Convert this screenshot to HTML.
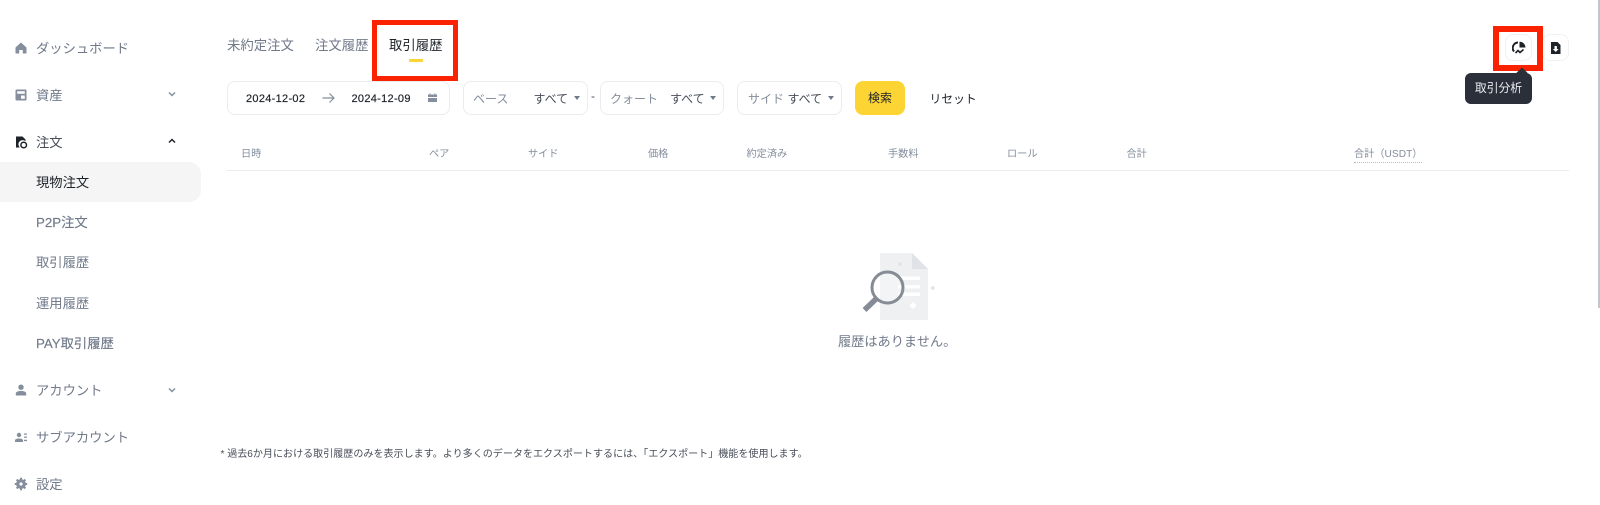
<!DOCTYPE html>
<html lang="ja"><head><meta charset="utf-8">
<style>
html,body{margin:0;padding:0;background:#fff;}
body{width:1600px;height:505px;position:relative;overflow:hidden;font-family:"Liberation Sans","Noto Sans CJK JP",sans-serif;color:#1e2329;}
.t{position:absolute;white-space:nowrap;line-height:20px;}
.side{font-size:13.3px;color:#707a8a;}
.th{font-size:10.2px;color:#848e9c;}
.f{font-size:12px;}
.d{font-size:11px;letter-spacing:.3px;color:#1e2329;-webkit-text-stroke:.2px #1e2329;}
.box{position:absolute;box-sizing:border-box;border:1px solid #eaecef;border-radius:8px;background:#fff;}
svg{position:absolute;}
.red{position:absolute;box-sizing:border-box;border:5px solid #fa2200;}
.car{position:absolute;width:0;height:0;border-left:3px solid transparent;border-right:3px solid transparent;border-top:4px solid #707a8a;}
</style></head><body>
<div style="position:absolute;left:0;top:162px;width:201px;height:40px;background:#f5f5f5;border-radius:0 12px 12px 0"></div>

<svg style="left:14px;top:41px" width="14" height="14" viewBox="0 0 14 14"><path d="M7 1.5L1.5 6.5V12.5H5.2V9H8.8V12.5H12.5V6.5Z" fill="#848e9c"/></svg>
<div class="t side" style="left:36px;top:39px">ダッシュボード</div>
<svg style="left:14px;top:88px" width="14" height="14" viewBox="0 0 14 14"><path fill-rule="evenodd" d="M2.5 1.5H11.5A1 1 0 0 1 12.5 2.5V11.5A1 1 0 0 1 11.5 12.5H2.5A1 1 0 0 1 1.5 11.5V2.5A1 1 0 0 1 2.5 1.5ZM3.2 3.2V5.8H10.8V3.2ZM7 7.5V10.8H10.8V7.5Z" fill="#848e9c"/></svg>
<div class="t side" style="left:36px;top:86px">資産</div>
<svg style="left:166px;top:88px" width="12" height="12" viewBox="0 0 12 12"><path d="M3 4.5L6 7.5L9 4.5" fill="none" stroke="#848e9c" stroke-width="1.5"/></svg>
<svg style="left:14px;top:135px" width="14" height="14" viewBox="0 0 14 14"><path d="M2 1.5H8.5L11.5 4.5V6.2A4.2 4.2 0 0 0 5.8 12.5H2Z" fill="#1e2329"/><circle cx="9.7" cy="10" r="2.8" fill="none" stroke="#1e2329" stroke-width="1.5"/></svg>
<div class="t side" style="left:36px;top:133px;color:#474d57">注文</div>
<svg style="left:166px;top:135px" width="12" height="12" viewBox="0 0 12 12"><path d="M3 7.5L6 4.5L9 7.5" fill="none" stroke="#1e2329" stroke-width="1.5"/></svg>

<div class="t side" style="left:36px;top:173px;color:#1e2329">現物注文</div>
<div class="t side" style="left:36px;top:213px;-webkit-text-stroke:.15px #707a8a">P2P注文</div>
<div class="t side" style="left:36px;top:253px">取引履歴</div>
<div class="t side" style="left:36px;top:294px">運用履歴</div>
<div class="t side" style="left:36px;top:334px;-webkit-text-stroke:.15px #707a8a">PAY取引履歴</div>

<svg style="left:14px;top:383px" width="14" height="14" viewBox="0 0 14 14"><circle cx="7" cy="4.2" r="2.7" fill="#848e9c"/><path d="M1.8 12.5V10.5C1.8 8.8 4 8 7 8S12.2 8.8 12.2 10.5V12.5Z" fill="#848e9c"/></svg>
<div class="t side" style="left:36px;top:381px">アカウント</div>
<svg style="left:166px;top:384px" width="12" height="12" viewBox="0 0 12 12"><path d="M3 4.5L6 7.5L9 4.5" fill="none" stroke="#848e9c" stroke-width="1.5"/></svg>
<svg style="left:14px;top:430px" width="14" height="14" viewBox="0 0 14 14"><circle cx="5" cy="5" r="2.2" fill="#848e9c"/><path d="M1 12V10.5C1 9 3 8.5 5 8.5S9 9 9 10.5V12Z" fill="#848e9c"/><path d="M10 3.5H13V4.8H10ZM10 6.5H13V7.8H10ZM10 9.8H13V11.1H10Z" fill="#848e9c"/></svg>
<div class="t side" style="left:36px;top:428px">サブアカウント</div>
<svg style="left:14px;top:477px" width="14" height="14" viewBox="0 0 14 14"><circle cx="7" cy="7" r="3.4" fill="none" stroke="#848e9c" stroke-width="3"/><path d="M7 .8V13.2M.8 7H13.2M2.6 2.6L11.4 11.4M11.4 2.6L2.6 11.4" stroke="#848e9c" stroke-width="2"/><circle cx="7" cy="7" r="1.6" fill="#fff"/></svg>
<div class="t side" style="left:36px;top:475px">設定</div>

<div class="t" style="left:227px;top:36px;font-size:13.4px;color:#707a8a">未約定注文</div>
<div class="t" style="left:315px;top:36px;font-size:13.4px;color:#707a8a">注文履歴</div>
<div class="t" style="left:389px;top:36px;font-size:13.4px;color:#1e2329">取引履歴</div>
<div style="position:absolute;left:408.500px;top:59px;width:14px;height:2.5px;background:#fcd535;border-radius:1px"></div>
<div class="red" style="left:372px;top:20px;width:86px;height:61px"></div>

<div class="box" style="left:227px;top:81px;width:223px;height:34px"></div>
<div class="t d" style="left:246px;top:89px">2024-12-02</div>
<svg style="left:322px;top:92px" width="13" height="12" viewBox="0 0 13 12"><path d="M0.5 6H12M7.5 1.5L12 6L7.5 10.5" fill="none" stroke="#848e9c" stroke-width="1.2"/></svg>
<div class="t d" style="left:351.5px;top:89px">2024-12-09</div>
<svg style="left:427px;top:93px" width="11" height="10" viewBox="0 0 11 10"><path d="M2.5 0.5H3.5V1.5H7.5V0.5H8.5V1.5H10V4H1V1.5H2.5ZM1 5H10V9H1Z" fill="#848e9c"/></svg>

<div class="box" style="left:463px;top:81px;width:125px;height:34px"></div>
<div class="t f" style="left:473px;top:89px;color:#848e9c">ベース</div>
<div class="t f" style="left:533.5px;top:89px;color:#474d57">すべて</div>
<div class="car" style="left:574px;top:96px"></div>
<div class="t f" style="left:591px;top:86px;color:#474d57">-</div>
<div class="box" style="left:600px;top:81px;width:124px;height:34px"></div>
<div class="t f" style="left:610px;top:89px;color:#848e9c">クォート</div>
<div class="t f" style="left:670px;top:89px;color:#474d57">すべて</div>
<div class="car" style="left:710px;top:96px"></div>
<div class="box" style="left:737px;top:81px;width:105px;height:34px"></div>
<div class="t f" style="left:748px;top:89px;color:#848e9c">サイド</div>
<div class="t f" style="left:787.5px;top:89px;color:#474d57">すべて</div>
<div class="car" style="left:828px;top:96px"></div>
<div style="position:absolute;left:855px;top:81px;width:50px;height:34px;background:#fcd535;border-radius:8px;font-size:12px;line-height:35px;text-align:center;color:#1e2329">検索</div>
<div class="t" style="left:929.5px;top:89px;font-size:11.8px;color:#1e2329">リセット</div>

<div class="t th" style="left:241px;top:145px">日時</div>
<div class="t th" style="left:429px;top:145px">ペア</div>
<div class="t th" style="left:528px;top:145px">サイド</div>
<div class="t th" style="left:648px;top:145px">価格</div>
<div class="t th" style="left:746.5px;top:145px">約定済み</div>
<div class="t th" style="left:888px;top:145px">手数料</div>
<div class="t th" style="left:1007px;top:145px">ロール</div>
<div class="t th" style="left:1126.5px;top:145px">合計</div>
<div class="t th" style="left:1354px;top:147px;line-height:15px;border-bottom:1px dotted #b7bdc6">合計（USDT）</div>
<div style="position:absolute;left:227px;top:170px;width:1342px;height:1px;background:#eaecef"></div>

<svg style="left:860px;top:250px" width="80" height="72" viewBox="0 0 80 72">
<path d="M20 3H52L68 19V70H20Z" fill="#eef0f2"/>
<path d="M52 3L68 19H52Z" fill="#dfe2e6"/>
<path d="M38 26.500H60V30H38ZM38 35H60V38.500H38ZM38 42.500H60V46H38Z" fill="#fff"/>
<path d="M49.500 55.500L53 52L56.500 55.500L53 59Z" fill="#fff"/>
<circle cx="40" cy="14" r="1.8" fill="#dfe2e6"/><path d="M70.500 38L72.700 35.800L75 38L72.700 40.200Z" fill="#dfe2e6"/>
<circle cx="27.500" cy="37.500" r="15.500" fill="#fff" fill-opacity=".25" stroke="#858c96" stroke-width="3"/>
<path d="M16.500 48.500L4.500 60" stroke="#858c96" stroke-width="5.500"/>
</svg>
<div class="t" style="left:838px;top:332px;font-size:13.2px;color:#707a8a">履歴はありません。</div>

<div class="t" style="left:220.500px;top:444.500px;font-size:10.05px;color:#474d57">* 過去6か月における取引履歴のみを表示します。より多くのデータをエクスポートするには、「エクスポート」機能を使用します。</div>

<div class="box" style="left:1505px;top:34px;width:27px;height:27px;border-color:#f0f1f2"></div>
<svg style="left:1512px;top:41px" width="14" height="14" viewBox="0 0 14 14"><path d="M6 1.500A5.500 5.500 0 0 0 2 10.500" fill="none" stroke="#1e2329" stroke-width="2"/><path d="M7.500 0.800V6.500H13.500A5.800 5.800 0 0 0 7.500 0.800Z" fill="#1e2329"/><path d="M3.500 12L6 9.500L8 11.500L11.500 8.500" fill="none" stroke="#1e2329" stroke-width="1.600"/></svg>
<div class="box" style="left:1542px;top:34px;width:27px;height:27px;border-color:#f0f1f2"></div>
<svg style="left:1549px;top:41px" width="13" height="14" viewBox="0 0 13 14"><path fill-rule="evenodd" d="M2 1H8.500L11.500 4V13H2ZM5.500 5V8H3.800L6.700 11L9.600 8H7.900V5Z" fill="#1e2329"/></svg>
<div class="red" style="left:1493px;top:26px;width:50px;height:45px;border-width:6px"></div>
<div style="position:absolute;left:1518px;top:69px;width:8px;height:8px;background:#2b2f3a;transform:rotate(45deg)"></div>
<div style="position:absolute;left:1465px;top:73px;width:67px;height:31px;background:#2b2f3a;border-radius:6px;color:#eaecef;font-size:11.8px;line-height:31px;text-align:center">取引分析</div>
<div style="position:absolute;left:1597.500px;top:0;width:2.500px;height:308px;background:#c2c6cd"></div>
</body></html>
